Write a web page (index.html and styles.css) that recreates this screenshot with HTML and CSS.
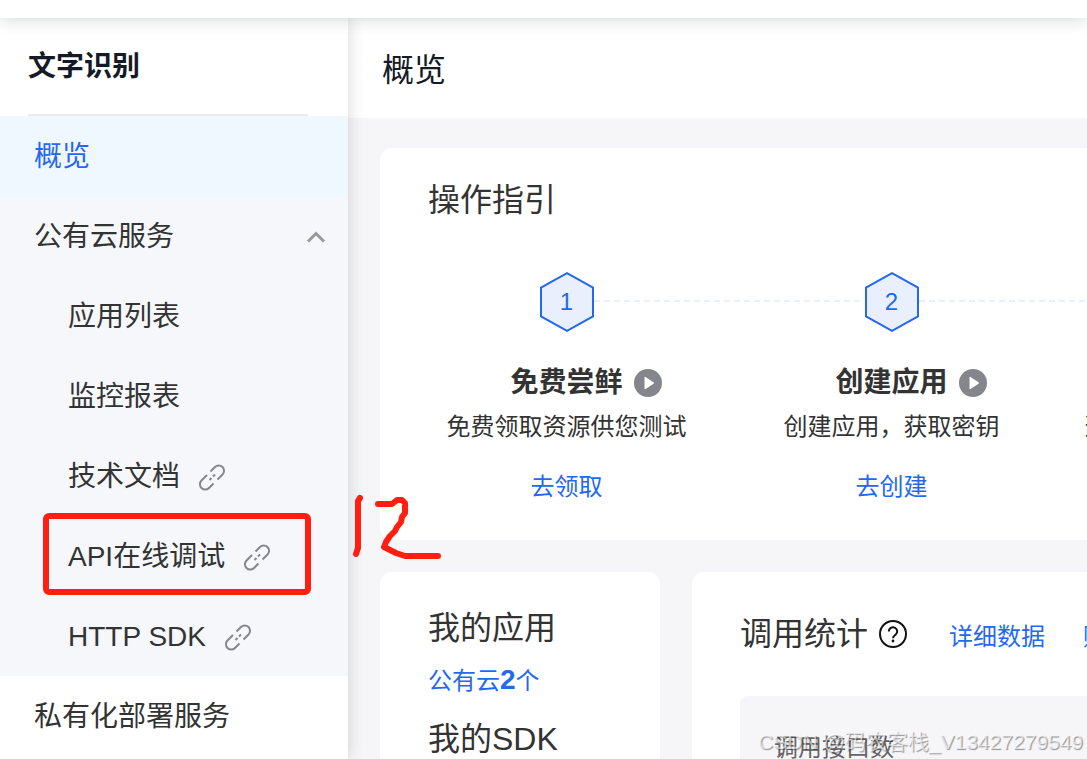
FILE: index.html
```html
<!DOCTYPE html>
<html lang="zh-CN">
<head>
<meta charset="utf-8">
<title>文字识别 - 概览</title>
<link rel="stylesheet" href="styles.css">
</head>
<body>
<svg class="sprite" aria-hidden="true">
  <symbol id="link" viewBox="0 0 28 28">
    <g fill="none" stroke="currentColor" stroke-width="2">
      <path d="M12.500 8.500 17 4A5.300 5.300 0 0 1 24.500 11.500L19.500 16.500"/>
      <path d="M9 12 3.500 17.500A5.300 5.300 0 0 0 11 25L15.500 20.500"/>
      <path d="M11.500 17 13.500 15M15 13.500 17 11.500"/>
    </g>
  </symbol>
  <symbol id="play" viewBox="0 0 28 28">
    <circle cx="14" cy="14" r="14" fill="#85858c"/>
    <path d="M10.500 8.500v11a.7.7 0 0 0 1 .6l8-5.300a.9.9 0 0 0 0-1.500l-8-5.300a.7.7 0 0 0-1 .5z" fill="#fff"/>
  </symbol>
  <symbol id="hexagon" viewBox="0 0 56 60">
    <path d="M28 1.200 54 15.500V44.500L28 58.800 2 44.500V15.500Z" fill="#e9effd" stroke="#2468f2" stroke-width="2"/>
  </symbol>
</svg>
<div class="app">
  <header class="topbar"></header>
  <div class="shell">
    <aside class="sidebar">
      <h2 class="product">文字识别</h2>
      <nav class="nav">
        <a class="nav-item active" href="#">概览</a>
        <div class="nav-group">
          <button class="nav-item nav-toggle" type="button" aria-expanded="true">公有云服务
            <svg class="chevron" viewBox="0 0 20 12" aria-hidden="true"><path d="M2 10.500 10 2.500 18 10.500" fill="none" stroke="#999" stroke-width="3"/></svg>
          </button>
          <a class="nav-item sub" href="#">应用列表</a>
          <a class="nav-item sub" href="#">监控报表</a>
          <a class="nav-item sub" href="#">技术文档<svg class="link-icon" aria-hidden="true"><use href="#link"/></svg></a>
          <a class="nav-item sub marked" href="#">API在线调试<svg class="link-icon" aria-hidden="true"><use href="#link"/></svg></a>
          <a class="nav-item sub" href="#">HTTP SDK<svg class="link-icon" aria-hidden="true"><use href="#link"/></svg></a>
        </div>
        <a class="nav-item" href="#">私有化部署服务</a>
      </nav>
    </aside>
    <main class="main">
      <div class="page-head"><h1 class="title">概览</h1></div>
      <div class="content">
        <section class="card guide">
          <h2 class="title">操作指引</h2>
          <ol class="steps">
            <li class="step">
              <div class="badge"><svg class="hexagon" aria-hidden="true"><use href="#hexagon"/></svg><span class="number">1</span></div>
              <h3 class="step-title">免费尝鲜<svg class="play" aria-hidden="true"><use href="#play"/></svg></h3>
              <p class="step-text">免费领取资源供您测试</p>
              <a class="step-link" href="#">去领取</a>
            </li>
            <li class="step">
              <div class="badge"><svg class="hexagon" aria-hidden="true"><use href="#hexagon"/></svg><span class="number">2</span></div>
              <h3 class="step-title">创建应用<svg class="play" aria-hidden="true"><use href="#play"/></svg></h3>
              <p class="step-text">创建应用，获取密钥</p>
              <a class="step-link" href="#">去创建</a>
            </li>
            <li class="step">
              <div class="badge"><svg class="hexagon" aria-hidden="true"><use href="#hexagon"/></svg><span class="number">3</span></div>
              <h3 class="step-title">调用服务</h3>
              <p class="step-text">选择接口进行服务的调用</p>
            </li>
          </ol>
        </section>
        <div class="row">
          <section class="card mine">
            <h2 class="title">我的应用</h2>
            <a class="count" href="#">公有云<b class="count-number">2</b>个</a>
            <h2 class="title">我的SDK</h2>
          </section>
          <section class="card stats">
            <div class="stats-head">
              <h2 class="title">调用统计</h2>
              <svg class="help" viewBox="0 0 28 28" aria-hidden="true">
                <g fill="none" stroke="#111" stroke-width="2">
                  <circle cx="14" cy="14" r="13"/>
                  <path d="M9.800 11.500a4.200 4.200 0 1 1 6.800 3.200c-1.700 1.300-2.600 1.800-2.600 3.600"/>
                </g>
                <circle cx="14" cy="21" r="1.400" fill="#111"/>
              </svg>
              <a class="stats-link" href="#">详细数据</a>
              <a class="stats-link" href="#">购买</a>
            </div>
            <div class="panel">调用接口数</div>
          </section>
        </div>
      </div>
    </main>
  </div>
  <svg class="handwriting" viewBox="0 0 90 70" role="img" aria-label="12">
    <g fill="none" stroke="#ff1e10" stroke-width="6" stroke-linecap="round" stroke-linejoin="round">
      <path d="M10 8 8 11V58L6 64"/>
      <path d="M28 14H42L47 10H52L55 13V23L52 27 51 32 47 37 45 41 40 46 36 52 34 57 40 60 46 63 55 66H88"/>
    </g>
  </svg>
  <div class="watermark">CSDN @码农客栈_V13427279549</div>
</div>
</body>
</html>
```

FILE: styles.css
```css
* { box-sizing: border-box; }

body {
  margin: 0;
  color: #333;
  background: #f6f6f9;
  font-family: "Liberation Sans", "Noto Sans CJK SC", sans-serif;
  font-size: 24px;
  line-height: 36px;
}

h1, h2, h3, p, ol { margin: 0; padding: 0; }
a { color: #2468f2; text-decoration: none; }

.sprite { display: none; }

.app {
  position: relative;
  display: flex;
  flex-direction: column;
  height: 100vh;
  overflow: hidden;
}

.topbar {
  z-index: 2;
  flex: 0 0 18px;
  background: #fff;
  box-shadow: 0 2px 16px rgba(7, 28, 20, 0.16);
}

.shell {
  display: flex;
  flex: 1;
  min-height: 0;
}

.sidebar {
  z-index: 1;
  flex: 0 0 348px;
  background: #fff;
  box-shadow: 0 0 16px rgba(0, 0, 0, 0.16);
}

.product {
  margin: 0 40px 0 28px;
  padding: 28px 0 26px;
  border-bottom: 2px solid #e8ebf2;
  color: #151b26;
  font-size: 28px;
  line-height: 42px;
}

.nav-item {
  display: flex;
  align-items: center;
  width: 100%;
  height: 80px;
  padding: 2px 22px 0 34px;
  border: 0;
  background: none;
  color: #333;
  font: inherit;
  font-size: 28px;
}

.nav-item.active { background: #f0f8ff; color: #2468f2; }
.nav-group { background: #f6f7fb; }
.nav-toggle { justify-content: space-between; }
.nav-item.sub { padding-left: 68px; }
.chevron { width: 20px; height: 12px; }
.link-icon { width: 28px; height: 28px; margin-left: 18px; color: #85878c; }

.marked { position: relative; }
.marked::after {
  content: "";
  position: absolute;
  inset: -3px 37px 1px 43px;
  border: 6px solid #ff1e10;
  border-radius: 6px;
}

.main { flex: 1; min-width: 0; }

.page-head {
  padding: 28px 34px 24px;
  background: #fff;
}

.title {
  font-size: 32px;
  font-weight: 400;
  line-height: 48px;
}

.page-head .title { color: #151b26; }

.content {
  display: flex;
  flex-direction: column;
  gap: 32px;
  padding: 30px 0 0 32px;
}

.card {
  border-radius: 12px;
  background: #fff;
}

.guide {
  padding: 28px 0 36px 24px;
  border-radius: 12px 0 0 12px;
  overflow: hidden;
}

.guide .title { padding-left: 24px; }

.steps {
  display: flex;
  margin-top: 48px;
  list-style: none;
}

.step {
  position: relative;
  display: flex;
  flex: 0 0 325px;
  flex-direction: column;
  align-items: center;
  white-space: nowrap;
}

.step::after {
  content: "";
  position: absolute;
  top: 28px;
  left: 190px;
  width: 270px;
  height: 2px;
  background: repeating-linear-gradient(90deg, #e9effd 0 6px, transparent 6px 10px);
}

.step:last-child::after { display: none; }

.badge {
  display: grid;
  place-items: center;
  height: 60px;
  color: #2468f2;
}

.hexagon, .number { grid-area: 1 / 1; }
.hexagon { width: 56px; height: 60px; }

.step-title {
  position: relative;
  margin-top: 29px;
  font-size: 28px;
  line-height: 44px;
}

.play {
  position: absolute;
  top: 8px;
  left: calc(100% + 11px);
  width: 28px;
  height: 28px;
}

.step-text { margin-top: 4px; }
.step-link { margin-top: 24px; }

.row {
  display: flex;
  gap: 32px;
}

.guide { padding-bottom: 35px; }

.mine {
  flex: 0 0 280px;
  padding: 32px 48px;
}

.count { display: block; margin: 10px 0 16px; }
.count-number { font-size: 28px; }

.stats {
  flex: 1;
  min-width: 0;
  padding: 38px 0 0 48px;
  border-radius: 12px 0 0 0;
  overflow: hidden;
}

.stats-head {
  display: flex;
  align-items: center;
  white-space: nowrap;
}

.help { flex: none; width: 28px; height: 28px; margin: 0 42px 0 11px; }
.stats-link { margin-right: 38px; padding-top: 6px; }

.panel {
  margin-top: 38px;
  padding: 34px 34px 48px;
  border-radius: 8px 0 0 0;
  background: #f6f6f9;
  color: #666;
}

.handwriting {
  position: absolute;
  top: 490px;
  left: 350px;
  z-index: 3;
  width: 90px;
  height: 70px;
  overflow: visible;
}

.watermark {
  position: absolute;
  right: 4px;
  bottom: 2px;
  z-index: 3;
  color: rgba(255, 255, 255, 0.6);
  font-size: 21px;
  line-height: 30px;
  text-shadow: 1px 1px 1px rgba(0, 0, 0, 0.4);
}
```
